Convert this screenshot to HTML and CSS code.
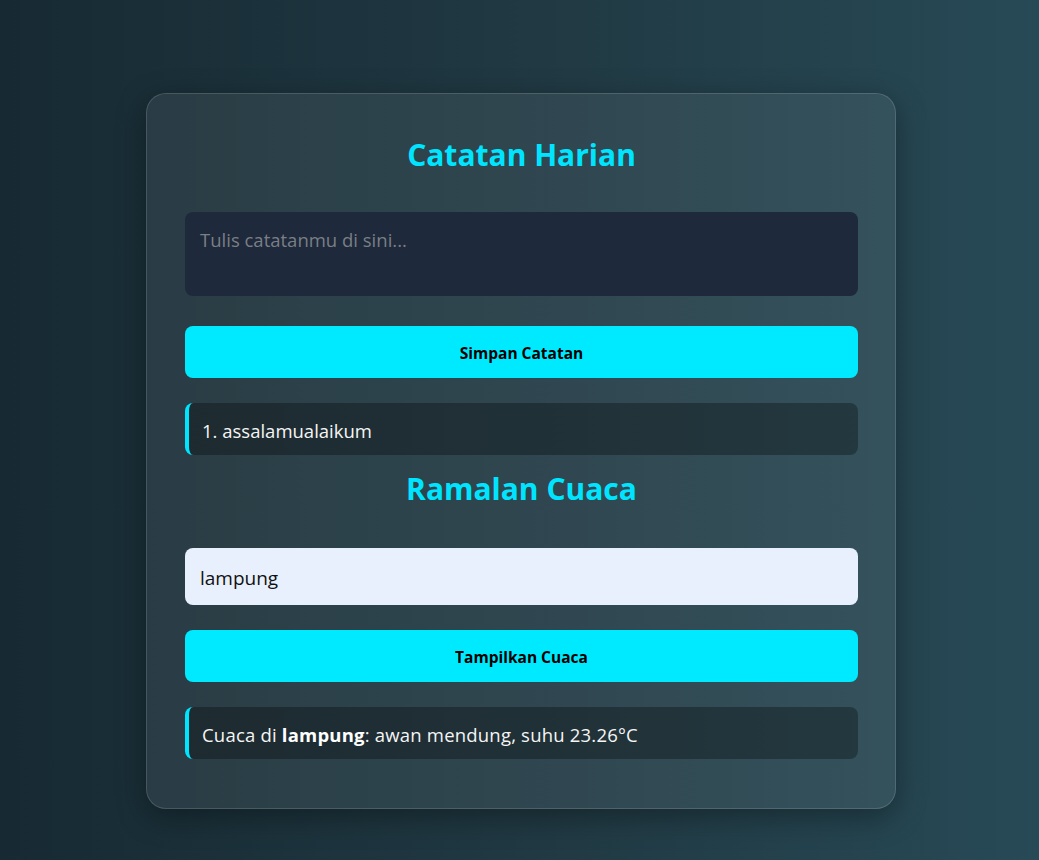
FILE: index.html
```html
<!DOCTYPE html>
<html lang="id">
<head>
<meta charset="utf-8">
<title>Catatan Harian &amp; Ramalan Cuaca</title>
<link rel="stylesheet" href="styles.css">
</head>
<body>
  <main class="card">
    <h2 class="title">Catatan Harian</h2>
    <textarea class="note-input" placeholder="Tulis catatanmu di sini..."></textarea>
    <button class="btn btn-save">Simpan Catatan</button>
    <ul class="notes">
      <li class="item">1. assalamualaikum</li>
    </ul>
    <h2 class="title title-weather">Ramalan Cuaca</h2>
    <input class="city-input" type="text" value="lampung">
    <button class="btn btn-weather">Tampilkan Cuaca</button>
    <div class="item result">Cuaca di <strong>lampung</strong>: awan mendung, suhu 23.26°C</div>
  </main>
</body>
</html>
```

FILE: styles.css
```css
* { box-sizing: border-box; }

html, body {
  margin: 0;
  height: 100%;
}

body {
  background: linear-gradient(to right, #172a33, #213a44 55%, #274a56);
  font-family: "Open Sans", "Noto Sans", sans-serif;
  color: #f1f5f9;
  padding-top: 93px;
}

.card {
  width: 750px;
  margin: 0 0 0 calc(50% - 373.5px);
  padding: 40px 37px 49px 38px;
  background: rgba(255, 255, 255, 0.07);
  border: 1px solid rgba(255, 255, 255, 0.14);
  border-radius: 20px;
  box-shadow: 0 8px 30px rgba(0, 0, 0, 0.35);
  display: flex;
  flex-direction: column;
}

.title {
  margin: 0;
  text-align: center;
  color: #00e5ff;
  font-size: 30px;
  font-weight: 700;
  line-height: 42px;
  height: 44px;
}

.note-input {
  margin-top: 34px;
  height: 84px;
  border: none;
  border-radius: 8px;
  background: #1e293b;
  color: #f1f5f9;
  padding: 16px 15px 15px;
  font-family: inherit;
  font-size: 18.5px;
  line-height: 1.3;
  resize: none;
  outline: none;
}

.note-input::placeholder { color: #7a7f86; }

.btn {
  height: 52px;
  border: none;
  border-radius: 8px;
  background: #00eaff;
  color: #000;
  font-family: inherit;
  font-size: 15.5px;
  font-weight: 700;
  padding-top: 2px;
  cursor: pointer;
}

.btn-save { margin-top: 30px; }

.notes {
  list-style: none;
  margin: 25px 0 0;
  padding: 0;
}

.item {
  height: 52px;
  line-height: 49px;
  padding: 3px 14px 0 13px;
  background: rgba(0, 0, 0, 0.3);
  border-left: 4px solid #00e5ff;
  border-radius: 8px;
  color: #f5f5f5;
  font-size: 18.5px;
  white-space: nowrap;
}

.item strong { font-weight: 700; color: #fff; }

.title-weather { margin-top: 13px; }

.city-input {
  margin-top: 36px;
  height: 57px;
  border: none;
  border-radius: 8px;
  background: #e8f0fe;
  color: #111;
  padding: 2px 15px 0;
  font-family: inherit;
  font-size: 19px;
  outline: none;
}

.btn-weather { margin-top: 25px; }

.result { margin-top: 25px; letter-spacing: 0.2px; }
```
